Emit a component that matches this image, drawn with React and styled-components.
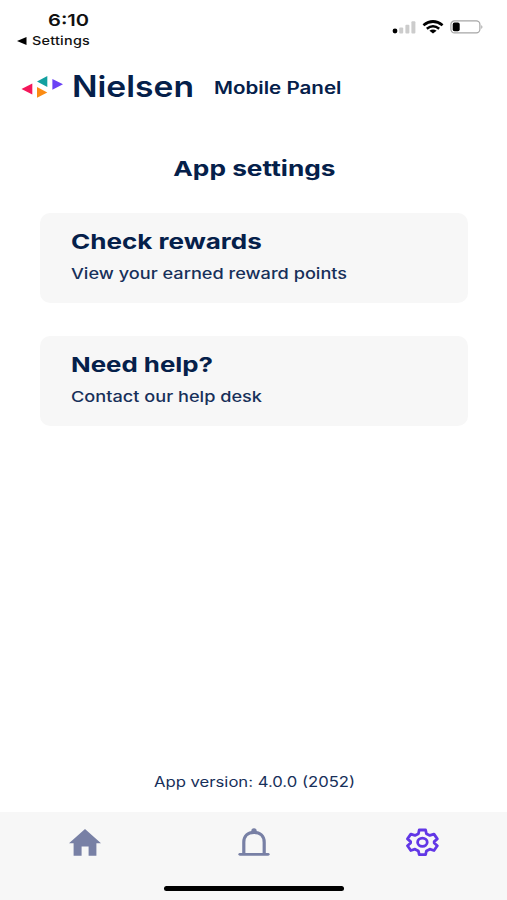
import React, { Fragment } from 'react';
import styled, { createGlobalStyle } from 'styled-components';

const navy = '#05204a';
const navySoft = '#17305a';

const cards = [
  {
    title: 'Check rewards',
    titleStretch: 1.27,
    text: 'View your earned reward points'
  },
  {
    title: 'Need help?',
    titleStretch: 1.26,
    text: 'Contact our help desk'
  }
];

const SignalIcon = () => (
  <svg width="24" height="14" viewBox="0 0 24 14">
    <circle cx="3" cy="11" r="2.4" fill="#000" />
    <rect x="7.2" y="7.5" width="4" height="6" rx="1" fill="#ccc" />
    <rect x="13.4" y="4.8" width="4" height="8.7" rx="1" fill="#ccc" />
    <rect x="19.4" y="1.2" width="4" height="12.3" rx="1" fill="#ccc" />
  </svg>
);

const WifiIcon = () => (
  <svg width="22" height="14" viewBox="0 0 22 14" fill="none" stroke="#000">
    <path d="M1.4 5.2Q11 -2.2 20.6 5.2" strokeWidth="2.7" />
    <path d="M4.8 8.7Q11 3.8 17.2 8.7" strokeWidth="2.5" />
    <path d="M7.4 10.8Q11 8 14.6 10.8L11 13.6Z" fill="#000" stroke="none" />
  </svg>
);

const BatteryIcon = () => (
  <svg width="34" height="14" viewBox="0 0 34 14">
    <rect
      x="0.9"
      y="0.9"
      width="29"
      height="12"
      rx="3.6"
      fill="none"
      stroke="#a6a6a6"
      strokeWidth="1.2"
    />
    <rect x="2.7" y="2.6" width="7" height="8.6" rx="1.8" fill="#000" />
    <path d="M31.4 5q1.9 1.9 0 3.9z" fill="#999" />
  </svg>
);

const LogoMark = () => (
  <svg width="42" height="24" viewBox="0 0 42 24">
    <path d="M0.5 14L11.3 8.6v11z" fill="#f4175a" />
    <path d="M16 6.4L26.3 0.9v11z" fill="#12a0a0" />
    <path d="M16 12L26.3 17.4L16 22.8z" fill="#fb8b12" />
    <path d="M31.4 3.9L42 9.3L31.4 14.8z" fill="#6a41f5" />
  </svg>
);

const HomeIcon = () => (
  <svg width="34" height="30" viewBox="0 0 34 30">
    <path
      d="M17 2L33 16.2H28.4V28.8H20.6V19.4H13.6V28.8H5.6V16.2H1z"
      fill="#7880a5"
    />
  </svg>
);

const BellIcon = () => (
  <svg width="34" height="30" viewBox="0 0 34 30" fill="none">
    <path
      d="M6.8 26.6V15.2C6.8 8.8 11 5.3 17 5.3S27.2 8.8 27.2 15.2V26.6"
      stroke="#7880a5"
      strokeWidth="3.2"
    />
    <path
      d="M2.8 27.3H31.2"
      stroke="#7880a5"
      strokeWidth="2.8"
      strokeLinecap="round"
    />
    <circle cx="17" cy="4" r="2.7" fill="#7880a5" />
  </svg>
);

const GearIcon = () => (
  <svg
    width="34"
    height="30"
    viewBox="0.6 -0.2 34 30"
    fill="none"
    stroke="#6237e6"
    strokeWidth="2.8"
    strokeLinejoin="round"
  >
    <path d="M13.8 2.8H20.2L21 6.5L24.4 8.2L28.6 6.9L31.9 11.7L28.8 14.4V15.8L31.9 18.5L28.6 23.3L24.4 22L21 23.8L20.2 27.4H13.8L13 23.8L9.6 22L5.4 23.3L2.1 18.5L5.2 15.8V14.4L2.1 11.7L5.4 6.9L9.6 8.2L13 6.5Z" />
    <ellipse cx="17" cy="15.1" rx="4.8" ry="4.1" />
  </svg>
);

const App = () => (
  <Fragment>
    <GlobalStyle />
    <Screen>
      <StatusBar>
        <Clock>
          <Time>6:10</Time>
          <BackLink>
            <BackArrow viewBox="0 0 10 8">
              <path d="M0 4L9.5 0v8z" />
            </BackArrow>
            <BackLabel>Settings</BackLabel>
          </BackLink>
        </Clock>
        <StatusIcons>
          <SignalIcon />
          <WifiIcon />
          <BatteryIcon />
        </StatusIcons>
      </StatusBar>

      <Header>
        <LogoMark />
        <Brand>Nielsen</Brand>
        <Product>Mobile Panel</Product>
      </Header>

      <Main>
        <Title>App settings</Title>
        {cards.map(card => (
          <Card key={card.title}>
            <CardTitle $stretch={card.titleStretch}>{card.title}</CardTitle>
            <CardText>{card.text}</CardText>
          </Card>
        ))}
        <Version>App version: 4.0.0 (2052)</Version>
      </Main>

      <TabBar>
        <Tabs>
          <Tab aria-label="Home">
            <HomeIcon />
          </Tab>
          <Tab aria-label="Notifications">
            <BellIcon />
          </Tab>
          <Tab aria-label="Settings">
            <GearIcon />
          </Tab>
        </Tabs>
        <HomeIndicator />
      </TabBar>
    </Screen>
  </Fragment>
);

export default App;

// Styled Components

const GlobalStyle = createGlobalStyle`
  * {
    box-sizing: border-box;
  }
  body {
    margin: 0;
    background-color: #fff;
    font-family: Inter, 'Liberation Sans', Arial, sans-serif;
    color: ${navy};
  }
  svg {
    display: block;
    flex: none;
  }
`;

const Screen = styled.div`
  display: flex;
  flex-direction: column;
  width: 507px;
  height: 900px;
  overflow: hidden;
  background-color: #fff;
`;

// Wide lettering: glyphs keep their height and grow sideways
const WideText = styled.div`
  width: max-content;
  white-space: nowrap;
  transform: scaleX(${props => props.$stretch || 1.2});
  transform-origin: left center;
`;

const StatusBar = styled.div`
  display: flex;
  justify-content: space-between;
  height: 60px;
  padding: 9px 23px 0 17px;
  color: #111;
`;

const Clock = styled.div`
  display: flex;
  flex-direction: column;
`;

const Time = styled(WideText).attrs({ $stretch: 1.22 })`
  margin-left: 31px;
  font-size: 16.5px;
  font-weight: 600;
  line-height: 22px;
`;

const BackLink = styled.div`
  display: flex;
  align-items: center;
  height: 20px;
`;

const BackArrow = styled.svg`
  width: 10px;
  height: 8px;
`;

const BackLabel = styled(WideText).attrs({ $stretch: 1.2 })`
  margin-left: 5px;
  font-size: 12px;
  font-weight: 500;
  line-height: 20px;
  letter-spacing: 0.2px;
`;

const StatusIcons = styled.div`
  display: flex;
  gap: 6px;
  padding-top: 11px;
`;

const Header = styled.header`
  display: flex;
  align-items: center;
  height: 54px;
  padding-left: 21px;
`;

const Brand = styled(WideText).attrs({ $stretch: 1.14 })`
  width: 141px;
  margin: -2px 0 0 8.5px;
  font-size: 29.5px;
  font-weight: 600;
  line-height: 40px;
`;

const Product = styled(WideText).attrs({ $stretch: 1.21 })`
  margin: 2px 0 0 1.5px;
  font-size: 17px;
  font-weight: 600;
  line-height: 24px;
`;

const Main = styled.main`
  display: flex;
  flex: 1;
  flex-direction: column;
  align-items: center;
  padding: 40px 39px 19px 40px;
`;

const Title = styled(WideText).attrs({ $stretch: 1.28 })`
  margin-bottom: 29px;
  font-size: 20.5px;
  font-weight: 700;
  line-height: 30px;
  transform-origin: center;
`;

const Card = styled.section`
  width: 100%;
  height: 90px;
  margin-bottom: 33px;
  padding: 15px 31px;
  border-radius: 10px;
  background-color: #f7f7f7;
`;

const CardTitle = styled(WideText)`
  font-size: 20.5px;
  font-weight: 700;
  line-height: 28px;
`;

const CardText = styled(WideText).attrs({ $stretch: 1.21 })`
  margin-top: 6px;
  font-size: 15px;
  font-weight: 500;
  line-height: 23px;
  color: ${navySoft};
`;

const Version = styled(WideText).attrs({ $stretch: 1.19 })`
  margin-top: auto;
  font-size: 14px;
  font-weight: 400;
  line-height: 22px;
  color: ${navySoft};
  transform-origin: center;
`;

const TabBar = styled.nav`
  display: flex;
  flex-direction: column;
  align-items: center;
  justify-content: space-between;
  height: 88px;
  padding-bottom: 9px;
  background-color: #f7f7f7;
`;

const Tabs = styled.div`
  display: grid;
  grid-template-columns: repeat(3, 1fr);
  width: 100%;
  padding-top: 15px;
`;

const Tab = styled.button`
  display: flex;
  justify-content: center;
  padding: 0;
  border: none;
  background: transparent;
  cursor: pointer;
`;

const HomeIndicator = styled.div`
  width: 180px;
  height: 5px;
  border-radius: 3px;
  background-color: #000;
`;
